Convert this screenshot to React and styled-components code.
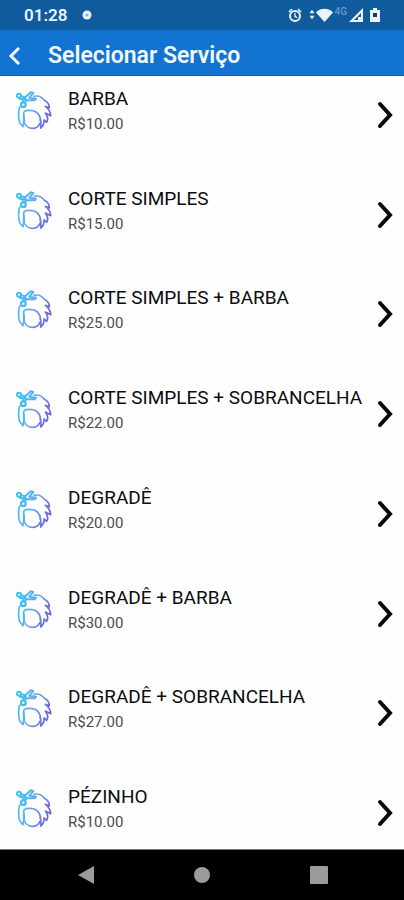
import React from 'react';
import styled, { createGlobalStyle } from 'styled-components';

const GlobalStyle = createGlobalStyle`
  * {
    box-sizing: border-box;
  }
  body {
    margin: 0;
    background: #fefefe;
    font-family: Roboto, 'Liberation Sans', sans-serif;
  }
  button {
    border: none;
    background: none;
    padding: 0;
    font: inherit;
    color: inherit;
    cursor: pointer;
  }
  svg {
    display: block;
    flex-shrink: 0;
  }
`;

const Screen = styled.div`
  display: flex;
  flex-direction: column;
  min-height: 100vh;
`;

const StatusBar = styled.div`
  display: flex;
  align-items: center;
  justify-content: space-between;
  height: 30px;
  padding: 0 24px;
  background: #105a9e;
  color: #e8f3fc;
`;

const StatusGroup = styled.div`
  display: flex;
  align-items: center;
  gap: ${(props) => props.$gap}px;
`;

const Clock = styled.span`
  font-size: 17px;
  line-height: 20px;
  font-weight: 600;
`;

const Network = styled.span`
  align-self: flex-start;
  margin-top: -2px;
  font-size: 10px;
  line-height: 12px;
  font-weight: 500;
  color: #6b9dcb;
`;

const Header = styled.header`
  display: flex;
  align-items: center;
  gap: 24px;
  height: 46px;
  padding: 6px 8px 0;
  background: #1274d0;
  border-bottom: 1px solid #0b63bd;
  color: #f2f8fe;
`;

const BackButton = styled.button`
  display: flex;
  width: 16px;
`;

const Title = styled.h1`
  margin: 0;
  font-size: 23px;
  line-height: 28px;
  font-weight: 600;
`;

const List = styled.main`
  flex: 1;
  display: flex;
  flex-direction: column;
  justify-content: space-between;
  padding: 12px 8px 17px 16px;
`;

const Item = styled.button`
  display: flex;
  align-items: center;
  width: 100%;
  height: 46px;
  text-align: left;
`;

const Texts = styled.span`
  flex: 1;
  display: flex;
  flex-direction: column;
  gap: 4px;
  padding-left: 16px;
  white-space: nowrap;
`;

const Name = styled.span`
  font-size: 19px;
  line-height: 22px;
  color: #0c0c10;
`;

const Price = styled.span`
  font-size: 15px;
  line-height: 20px;
  color: #4c4c4e;
`;

const Arrow = styled.span`
  padding-top: 8px;
`;

const NavBar = styled.nav`
  display: flex;
  align-items: center;
  justify-content: space-around;
  height: 51px;
  padding: 0 26px 0 28px;
  background: #000;
  border-top: 1px solid #777;
  color: #9b9b9b;
`;

const NavButton = styled.button`
  display: flex;
`;

const services = [
  { name: 'BARBA', price: 'R$10.00' },
  { name: 'CORTE SIMPLES', price: 'R$15.00' },
  { name: 'CORTE SIMPLES + BARBA', price: 'R$25.00' },
  { name: 'CORTE SIMPLES + SOBRANCELHA', price: 'R$22.00' },
  { name: 'DEGRADÊ', price: 'R$20.00' },
  { name: 'DEGRADÊ + BARBA', price: 'R$30.00' },
  { name: 'DEGRADÊ + SOBRANCELHA', price: 'R$27.00' },
  { name: 'PÉZINHO', price: 'R$10.00' },
];

const HairIcon = () => (
  <svg width="36" height="40" viewBox="18 18 108 120" fill="none" aria-hidden="true">
    <defs>
      <linearGradient id="hair" gradientUnits="userSpaceOnUse" x1="22" y1="50" x2="122" y2="84">
        <stop offset="0" stopColor="#3cc4ee" />
        <stop offset="0.5" stopColor="#68a8ef" />
        <stop offset="1" stopColor="#6c5fe0" />
      </linearGradient>
    </defs>
    <g stroke="url(#hair)" strokeWidth="5" strokeLinecap="round" strokeLinejoin="round">
      {/* scissors */}
      <circle cx="27" cy="32" r="6" strokeWidth="6" />
      <circle cx="40" cy="59" r="7" strokeWidth="7" />
      <path d="M33 34 L46 37 L62 22 L70 24 L58 38 L78 41 L74 46 L50 45 L44 52 M46 37 L38 50 M30 42 L48 43" strokeWidth="6" />
      {/* hair */}
      <path d="M72 34 C84 31 96 36 103 46 C111 50 118 59 118 68 L106 64 C114 70 122 80 122 92 L106 84 C112 92 115 104 110 112 L102 105 C103 114 100 122 92 129 C92 120 94 112 91 104" />
      {/* face */}
      <path d="M29 66 C25 80 25 98 29 113 L39 125 L41 112 L41 82 L47 77 C60 75 74 76 81 83 C88 90 92 98 91 106" />
      <path d="M42 92 L43 114 C48 124 56 130 67 130 C78 130 86 124 90 115" />
    </g>
  </svg>
);

const Chevron = () => (
  <svg width="20" height="28" viewBox="0 0 20 28" fill="none" stroke="#08080c" strokeWidth="4" aria-hidden="true">
    <path d="M4 3 L14 14 L4 25" strokeLinecap="round" />
  </svg>
);

const AlarmIcon = () => (
  <svg width="14" height="15" viewBox="0 0 14 15" fill="none" stroke="currentColor" aria-hidden="true">
    <circle cx="7" cy="8" r="5" strokeWidth="2" />
    <path d="M1 4 L4 1 M13 4 L10 1" strokeWidth="1.6" />
    <path d="M7 5 V8.4 L9.2 9.6" strokeWidth="1.3" />
  </svg>
);

const WifiIcon = () => (
  <svg width="24" height="14" viewBox="0 0 24 14" fill="currentColor" aria-hidden="true">
    <path d="M1 5 L3 2 L5 5 Z M1 8 L3 11 L5 8 Z" stroke="currentColor" strokeWidth="0.5" />
    <path d="M7 4.5 C11 -0.5 20 -0.5 24 4.5 L15.5 14 Z" />
  </svg>
);

const SignalIcon = () => (
  <svg width="14" height="14" viewBox="0 0 14 14" aria-hidden="true">
    <path d="M14 0 V14 H0 Z" fill="currentColor" />
    <path d="M12 5 V9 H9 V12 H5 Z" fill="#105a9e" />
  </svg>
);

const BatteryIcon = () => (
  <svg width="10" height="14" viewBox="0 0 10 14" aria-hidden="true">
    <path d="M3 0 H7 V2 H10 V14 H0 V2 H3 Z" fill="currentColor" />
    <rect x="3" y="5" width="4" height="4" fill="#123d70" />
  </svg>
);

const App = () => {
  return (
    <Screen>
      <GlobalStyle />
      <StatusBar>
        <StatusGroup $gap={15}>
          <Clock>01:28</Clock>
          <svg width="10" height="10" viewBox="0 0 10 10" aria-hidden="true">
            <circle cx="5" cy="5" r="4.5" fill="currentColor" />
            <circle cx="5" cy="5" r="1.5" fill="#8caed0" />
          </svg>
        </StatusGroup>
        <StatusGroup $gap={7}>
          <AlarmIcon />
          <StatusGroup $gap={2}>
            <WifiIcon />
            <Network>4G</Network>
            <SignalIcon />
          </StatusGroup>
          <BatteryIcon />
        </StatusGroup>
      </StatusBar>

      <Header>
        <BackButton aria-label="Voltar">
          <svg width="14" height="20" viewBox="0 0 14 20" fill="none" stroke="currentColor" strokeWidth="3">
            <path d="M11 2 L3 10 L11 18" />
          </svg>
        </BackButton>
        <Title>Selecionar Serviço</Title>
      </Header>

      <List>
        {services.map((service) => (
          <Item key={service.name}>
            <HairIcon />
            <Texts>
              <Name>{service.name}</Name>
              <Price>{service.price}</Price>
            </Texts>
            <Arrow>
              <Chevron />
            </Arrow>
          </Item>
        ))}
      </List>

      <NavBar>
        <NavButton aria-label="Voltar">
          <svg width="16" height="18" viewBox="0 0 16 18" fill="currentColor">
            <path d="M16 0 V18 L0 9 Z" />
          </svg>
        </NavButton>
        <NavButton aria-label="Início">
          <svg width="16" height="16" viewBox="0 0 16 16" fill="currentColor">
            <circle cx="8" cy="8" r="8" />
          </svg>
        </NavButton>
        <NavButton aria-label="Recentes">
          <svg width="18" height="18" viewBox="0 0 18 18" fill="currentColor">
            <rect width="18" height="18" rx="1" />
          </svg>
        </NavButton>
      </NavBar>
    </Screen>
  );
};

export default App;
